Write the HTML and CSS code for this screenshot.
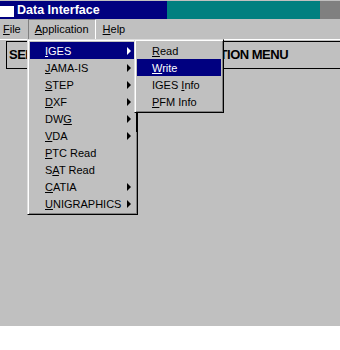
FILE: index.html
```html
<!DOCTYPE html>
<html lang="en">
<head>
  <meta charset="UTF-8" />
  <title>Data Interface</title>
  <link rel="stylesheet" href="styles.css">
</head>
<body>
  <div class="window">
    <div class="titlebar">
      <div class="title">
        <svg class="app-icon" width="14" height="13" viewBox="0 0 14 13">
          <rect x="0" y="0" width="14" height="13" fill="#fff" />
          <rect x="0" y="0" width="14" height="2" fill="#000080" />
        </svg>
        <span>Data Interface</span>
      </div>
      <div class="title-fill"></div>
      <div class="title-end"></div>
    </div>

    <div class="menubar">
      <span class="bar-item"><u>F</u>ile</span>
      <span class="bar-item open"><u>A</u>pplication</span>
      <span class="bar-item"><u>H</u>elp</span>
    </div>

    <div class="caption">SELECT DATA INTERFACE APPLICATION MENU</div>

    <!-- open dropdown: Application -->
    <div class="menu main-menu">
      <div class="item active"><span><u>I</u>GES</span><i class="arrow"></i></div>
      <div class="item"><span><u>J</u>AMA-IS</span><i class="arrow"></i></div>
      <div class="item"><span><u>S</u>TEP</span><i class="arrow"></i></div>
      <div class="item"><span><u>D</u>XF</span><i class="arrow"></i></div>
      <div class="item"><span>DW<u>G</u></span><i class="arrow"></i></div>
      <div class="item"><span><u>V</u>DA</span><i class="arrow"></i></div>
      <div class="item"><span><u>P</u>TC Read</span></div>
      <div class="item"><span>S<u>A</u>T Read</span></div>
      <div class="item"><span><u>C</u>ATIA</span><i class="arrow"></i></div>
      <div class="item"><span><u>U</u>NIGRAPHICS</span><i class="arrow"></i></div>
    </div>

    <!-- IGES submenu -->
    <div class="menu sub-menu">
      <div class="item"><span><u>R</u>ead</span></div>
      <div class="item active"><span><u>W</u>rite</span></div>
      <div class="item"><span>IGES <u>I</u>nfo</span></div>
      <div class="item"><span><u>P</u>FM Info</span></div>
    </div>

    <div class="redraw-line"></div>
  </div>
</body>
</html>
```

FILE: styles.css
```css
body {
  margin: 0;
  background-color: #fff;
  font-family: 'Liberation Sans', Arial, sans-serif;
  font-size: 11px;
  color: #000;
}
.window {
  position: relative;
  width: 340px;
  height: 326px;
  background-color: #c0c0c0;
  padding-top: 1px;
  box-sizing: border-box;
}
.titlebar {
  display: flex;
  height: 18px;
}
.title {
  display: flex;
  align-items: center;
  gap: 3px;
  width: 167px;
  background-color: #000080;
  color: #fff;
  font-weight: bold;
  font-size: 12.5px;
}
.app-icon {
  display: block;
  margin-top: 1px;
}
.title-fill {
  flex: 1;
  background-color: #008080;
}
.title-end {
  width: 20px;
  background-color: #808080;
}
.menubar {
  display: flex;
  align-items: center;
  height: 20px;
  border-bottom: 1px solid #fff;
}
.bar-item {
  padding: 2px 6px 3px;
  line-height: 14px;
  border: 1px solid transparent;
}
.bar-item:first-child {
  padding-left: 2px;
}
.bar-item.open {
  border-color: #808080 #fff #fff #808080;
}
.caption {
  margin: 1px 0 0 6px;
  height: 28px;
  padding: 5px 0 0 2px;
  box-sizing: border-box;
  border: 1px solid #000;
  border-right: none;
  font-weight: bold;
  font-size: 13px;
  letter-spacing: -0.5px;
  white-space: nowrap;
  overflow: hidden;
}
.menu {
  position: absolute;
  top: 39px;
  background-color: #c0c0c0;
  border: 1px solid;
  border-color: #dfdfdf #000 #000 #dfdfdf;
  box-shadow: inset 1px 1px 0 #fff, inset -1px -1px 0 #808080;
  padding: 2px 2px 2px 2px;
}
.main-menu {
  left: 27px;
  width: 105px;
}
.sub-menu {
  left: 134px;
  width: 84px;
}
.item {
  display: flex;
  align-items: center;
  justify-content: space-between;
  height: 17px;
  padding: 0 4px 0 15px;
}
.item.active {
  background-color: #000080;
  color: #fff;
}
.arrow {
  width: 0;
  height: 0;
  border-left: 4px solid #000;
  border-top: 4px solid transparent;
  border-bottom: 4px solid transparent;
}
.item.active .arrow {
  border-left-color: #fff;
}
.redraw-line {
  position: absolute;
  left: 136px;
  top: 112px;
  width: 2px;
  height: 20px;
  background-color: #000;
}
```
